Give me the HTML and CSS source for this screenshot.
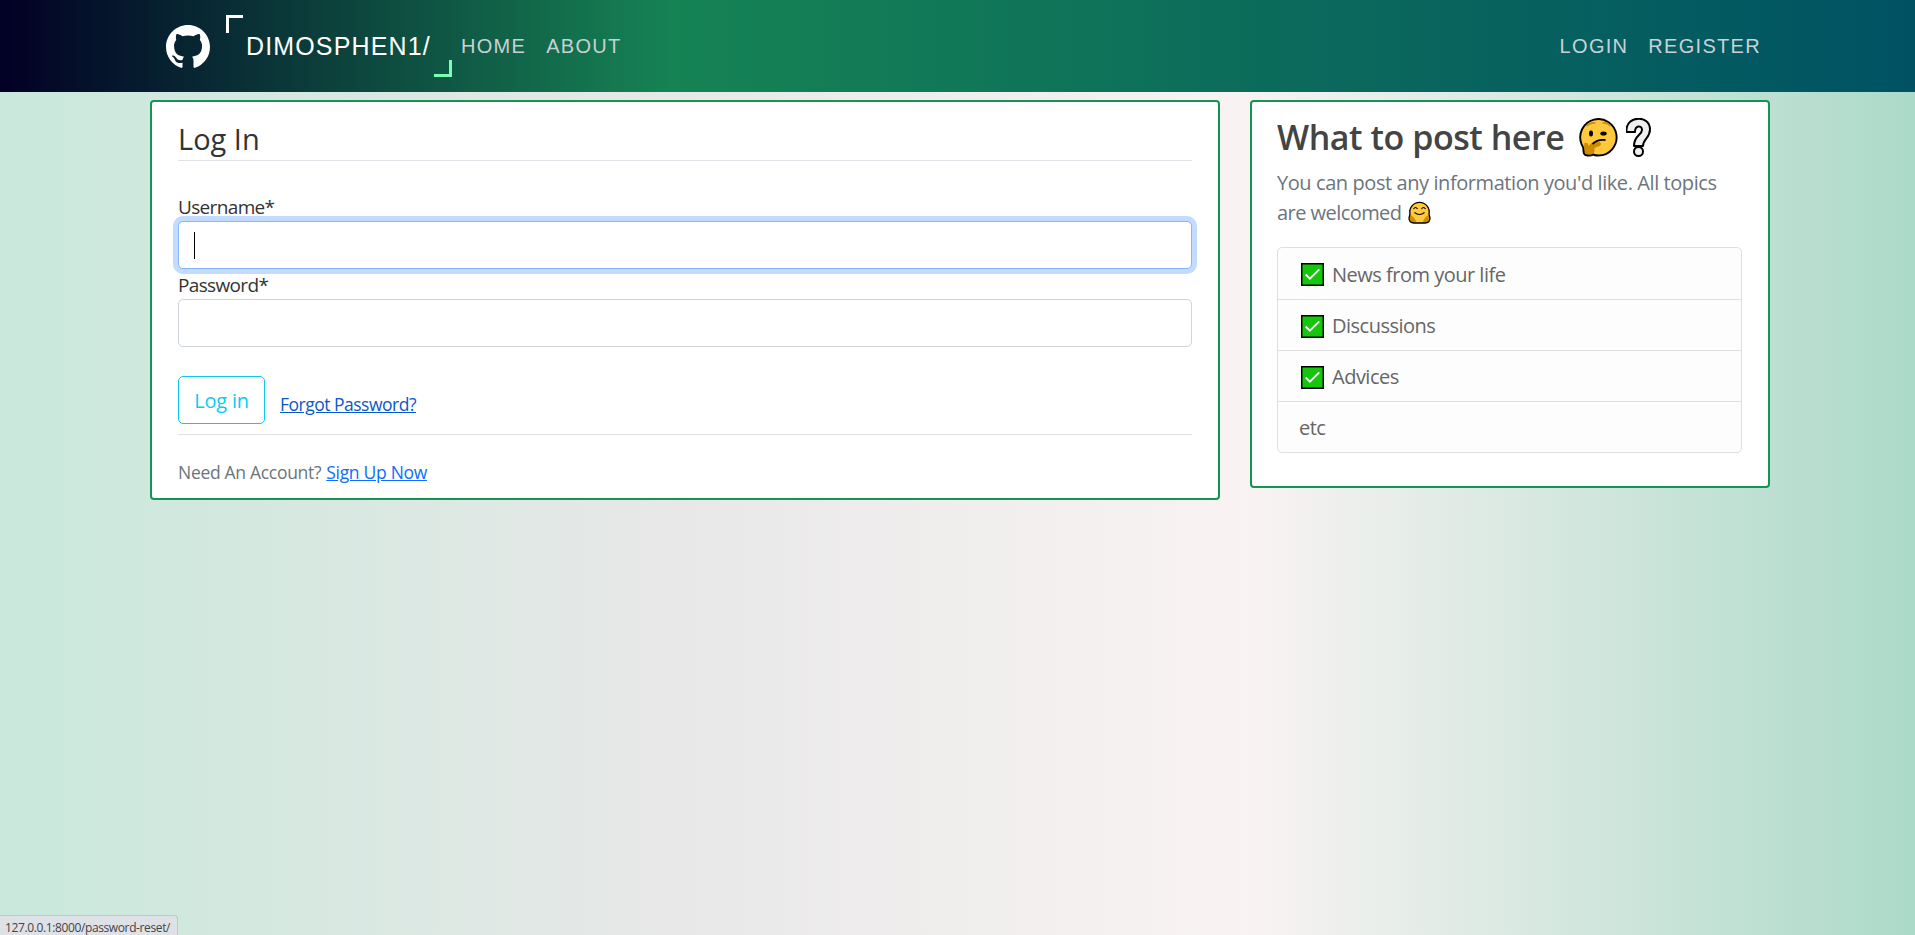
FILE: index.html
```html
<!DOCTYPE html>
<html lang="en">
<head>
<meta charset="utf-8">
<title>Log In</title>
<link rel="stylesheet" href="styles.css">
</head>
<body>
<header class="navbar">
  <svg class="logo" viewBox="0 0 16 16"><path d="M8 0C3.58 0 0 3.58 0 8c0 3.54 2.29 6.53 5.47 7.59.4.07.55-.17.55-.38 0-.19-.01-.82-.01-1.49-2.01.37-2.53-.49-2.69-.94-.09-.23-.48-.94-.82-1.13-.28-.15-.68-.52-.01-.53.63-.01 1.08.58 1.23.82.72 1.21 1.87.87 2.33.66.07-.52.28-.87.51-1.07-1.78-.2-3.64-.89-3.64-3.95 0-.87.31-1.59.82-2.15-.08-.2-.36-1.02.08-2.12 0 0 .67-.21 2.2.82.64-.18 1.32-.27 2-.27s1.36.09 2 .27c1.53-1.04 2.2-.82 2.2-.82.44 1.1.16 1.92.08 2.12.51.56.82 1.27.82 2.15 0 3.07-1.87 3.75-3.65 3.95.29.25.54.73.54 1.48 0 1.07-.01 1.93-.01 2.2 0 .21.15.46.55.38A8.01 8.01 0 0 0 16 8c0-4.42-3.58-8-8-8z"/></svg>
  <a class="brand">DIMOSPHEN1/</a>
  <nav class="links"><a>HOME</a><a>ABOUT</a></nav>
  <nav class="links links-end"><a>LOGIN</a><a>REGISTER</a></nav>
</header>
<main class="content">
  <section class="card login">
    <h1 class="legend">Log In</h1>
    <form class="form">
      <label class="label">Username*</label>
      <div class="input focused"><span class="caret"></span></div>
      <label class="label">Password*</label>
      <div class="input"></div>
      <div class="actions">
        <button class="btn" type="button">Log in</button>
        <a class="forgot">Forgot Password?</a>
      </div>
    </form>
    <p class="signup"><span class="need">Need An Account?</span><a>Sign Up Now</a></p>
  </section>
  <aside class="card side">
    <h2 class="title"><span>What to post here</span>
      <svg class="think" viewBox="0 0 39 39"><path d="M3 26A18.200 18.200 0 1 1 20 37.500Q16 37.500 15 36.500Q12 38 9 37.500Q5 37.500 5 33Q5 29 3 26z" fill="#ffc83d"/><path d="M6 25q4-1 4 3l3-3 8-1q3 2 0 4l-5 2q1 6-5 7H8q-3 0-3-5z" fill="#d08c00"/><path d="M3 26A18.200 18.200 0 1 1 20 37.500Q16 37.500 15 36.500Q12 38 9 37.500Q5 37.500 5 33Q5 29 3 26z" fill="none" stroke="#000" stroke-width="1.900"/><path d="M8 8q4-4 9-3M24 5q5-1 8 3" fill="none" stroke="#d08c00" stroke-width="1.700"/><ellipse cx="12.500" cy="15.500" rx="2" ry="3"/><ellipse cx="25" cy="15.500" rx="3.200" ry="2"/><path d="M14 26q5-5 13-4" fill="none" stroke="#000" stroke-width="1.800"/></svg>
      <svg class="mark" viewBox="0 0 25 39"><path d="M.500 14V12C1-3 24-3 24 11.500C24 20 17 21 17 28H8C8 17 16.500 17 16 11.500C15.500 7 9 7 9 14z" fill="#f0f0f0" stroke="#000" stroke-width="2" stroke-linejoin="round"/><circle cx="12.500" cy="33.500" r="4.500" fill="#f0f0f0" stroke="#000" stroke-width="2"/></svg>
    </h2>
    <p class="muted"><span class="line1">You can post any information you'd like. All topics</span><br><span class="line2">are welcomed</span>
      <svg class="hug" viewBox="0 0 23 23"><path d="M2 13A9.700 9.700 0 1 1 21 13L22 17Q22 22 17 22H6Q1 22 1 17z" fill="#ffc83d"/><path d="M1.500 14q4 0 7 7.500H5q-5-1-3.500-7.500zM21.500 14q-4 0-7 7.500h3.500q5-1 3.500-7.500z" fill="#d08c00"/><path d="M2 13A9.700 9.700 0 1 1 21 13L22 17Q22 22 17 22H6Q1 22 1 17z" fill="none" stroke="#000" stroke-width="1.300"/><path d="M5.500 8q2-3 4 0M13.500 8q2-3 4 0M6.500 11.500q5 4 10 0" fill="none" stroke="#000" stroke-width="1.200"/></svg></p>
    <ul class="list">
      <li><svg class="check" viewBox="0 0 22 22"><path d="M.7.700h20.600v20.600H.7z" fill="#16c60c" stroke="#000" stroke-width="1.400"/><path d="M4.500 11l4 4L17.500 6" fill="none" stroke="#fff" stroke-width="1.700"/></svg><span>News from your life</span></li>
      <li><svg class="check" viewBox="0 0 22 22"><path d="M.7.700h20.600v20.600H.7z" fill="#16c60c" stroke="#000" stroke-width="1.400"/><path d="M4.500 11l4 4L17.500 6" fill="none" stroke="#fff" stroke-width="1.700"/></svg><span>Discussions</span></li>
      <li><svg class="check" viewBox="0 0 22 22"><path d="M.7.700h20.600v20.600H.7z" fill="#16c60c" stroke="#000" stroke-width="1.400"/><path d="M4.500 11l4 4L17.500 6" fill="none" stroke="#fff" stroke-width="1.700"/></svg><span>Advices</span></li>
      <li class="plain"><span>etc</span></li>
    </ul>
  </aside>
</main>
<div class="status">127.0.0.1:8000/password-reset/</div>
</body>
</html>
```
FILE: styles.css
```css
*, *::before, *::after { box-sizing: border-box; }
body {
  margin: 0;
  height: 935px;
  overflow: hidden;
  font: 20px/30px "Open Sans", "Noto Sans", sans-serif;
  letter-spacing: -0.5px;
  color: #333;
  background: linear-gradient(90deg, #c9e8db 0%, #e8e8e8 35%, #f9f3f3 65%, #acdac9 100%);
}
h1, h2, p, ul { margin: 0; padding: 0; font-weight: 400; }
.navbar {
  display: flex;
  align-items: center;
  height: 92px;
  padding: 0 144px 0 166px;
  background: linear-gradient(90deg, #020024 0%, #168354 35%, #005263 100%);
  font-family: "Liberation Sans", Arial, sans-serif;
}
.logo { width: 44px; height: 44px; margin-top: 2px; fill: #fff; }
.brand {
  position: relative;
  width: 226px;
  height: 62px;
  margin-left: 16px;
  padding-left: 20px;
  font-size: 25px;
  line-height: 63px;
  letter-spacing: 1.15px;
  color: #fff;
  white-space: nowrap;
}
.brand::before, .brand::after { content: ""; position: absolute; }
.brand::before { left: 0; top: 0; width: 17px; height: 18px; border-left: 3px solid #fff; border-top: 3px solid #fff; }
.brand::after { right: 0; bottom: 0; width: 18px; height: 17px; border-right: 3px solid #76ffb5; border-bottom: 3px solid #76ffb5; }
.links { display: flex; gap: 20px; margin-left: 9px; padding-bottom: 1px; letter-spacing: 1.3px; color: #c6d2d6; }
.links-end { margin-left: auto; padding-right: 10px; }
.content { display: flex; align-items: flex-start; gap: 30px; padding: 8px 145px 0 150px; }
.card { background: #fff; border: 2px solid #159353; border-radius: 4px; }
.login { width: 1070px; height: 400px; padding: 13px 26px 0; }
.legend {
  height: 46px;
  border-bottom: 1px solid #dee2e6;
  font-size: 29px;
  line-height: 48px;
  letter-spacing: 0;
}
.form { padding-top: 30px; border-bottom: 1px solid #dee2e6; height: 274px; }
.label { display: block; height: 30px; line-height: 32px; font-size: 19px; letter-spacing: -0.65px; }
.input { height: 48px; border: 1px solid #ced4da; border-radius: 5px; background: #fff; padding: 10px 15px; }
.focused { border-color: #86b7fe; box-shadow: 0 0 0 5px #c2dbfe; }
.caret { display: block; width: 1px; height: 27px; background: #000; }
.actions { display: flex; gap: 15px; margin-top: 29px; }
.btn {
  width: 87px;
  height: 48px;
  padding: 2px 0 0;
  border: 1px solid #0dcaf0;
  border-radius: 5px;
  background: #fff;
  color: #0dcaf0;
  font: inherit;
  letter-spacing: -0.2px;
}
.forgot { line-height: 56px; font-size: 17.5px; letter-spacing: -0.5px; color: #0a58ca; text-decoration: underline; }
.signup { display: flex; gap: 5px; padding-top: 22px; font-size: 17.5px; letter-spacing: -0.3px; }
.need { color: #6c757d; }
.signup a { color: #0d6efd; text-decoration: underline; }
.side { width: 520px; height: 388px; padding: 11px 26px 0 25px; }
.title { display: flex; align-items: center; height: 48px; font-size: 34px; font-weight: 600; color: #444; letter-spacing: -0.45px; white-space: nowrap; }
.title span { width: 301px; flex: none; }
.think { width: 40px; height: 39px; }
.mark { width: 25px; height: 39px; margin-left: 8px; }
.muted { margin-top: 7px; color: #6c757d; white-space: nowrap; letter-spacing: -0.42px; }
.line2 { letter-spacing: -0.55px; }
.hug { width: 23px; height: 23px; margin-left: 2px; vertical-align: -4px; }
.list { list-style: none; margin-top: 19px; width: 465px; border: 1px solid #dfdfdf; border-radius: 5px; color: #666; background: #fdfdfd; }
.list li { display: flex; align-items: center; height: 51px; padding: 2px 0 0 23px; border-bottom: 1px solid #dfdfdf; }
.list li:first-child { height: 52px; }
.list li:last-child { height: 50px; border: 0; }
.list .plain { padding: 2px 0 0 21px; }
.check { width: 23px; height: 23px; margin-right: 8px; }
.status {
  position: absolute;
  left: 0;
  bottom: 0;
  width: 178px;
  height: 20px;
  padding: 1px 0 0 5px;
  background: #dee1e6;
  border: solid #b7ccc4;
  border-width: 1px 1px 0 0;
  border-radius: 0 4px 0 0;
  font-size: 12px;
  line-height: 21px;
  letter-spacing: -0.38px;
  color: #444;
}
```
